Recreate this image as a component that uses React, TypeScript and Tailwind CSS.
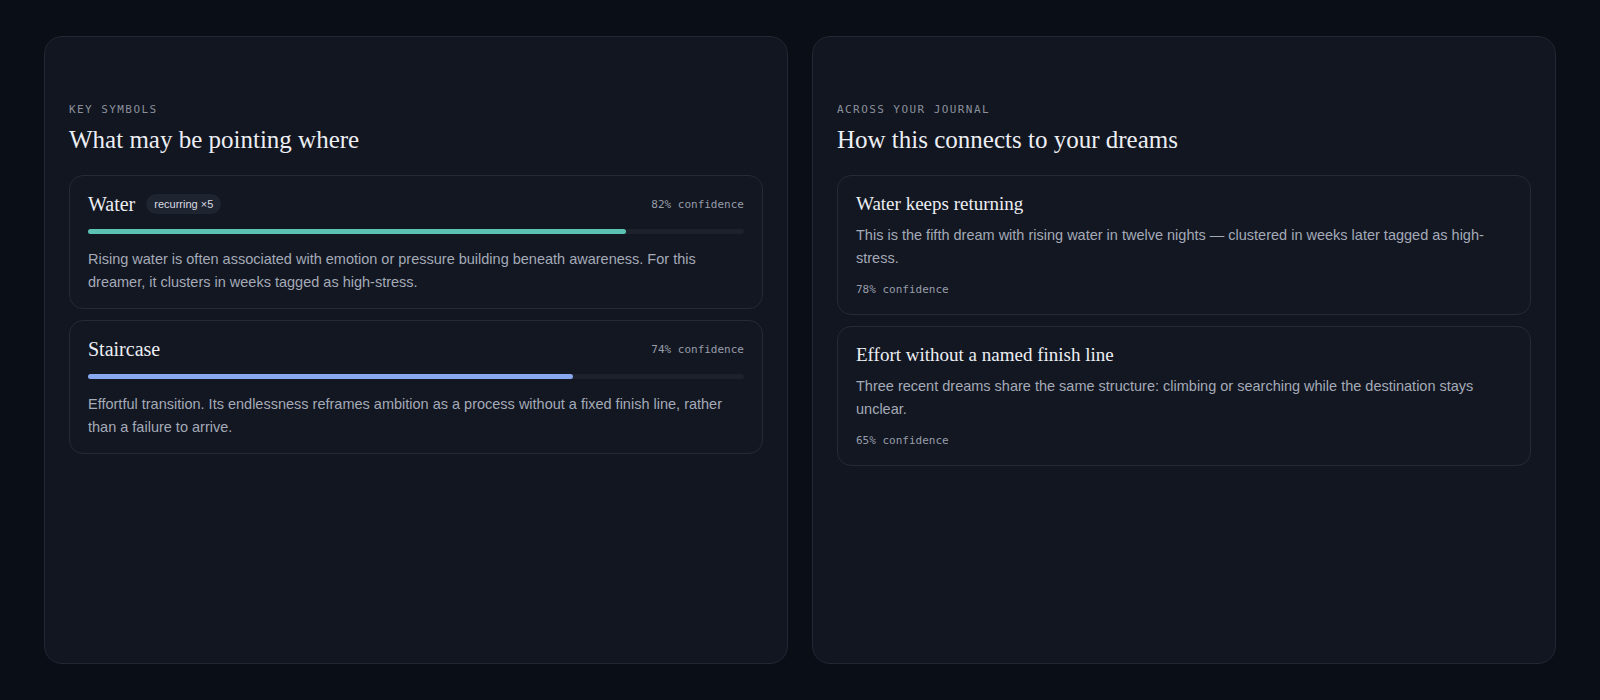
const serif = "font-['Liberation_Serif',_'DejaVu_Serif',_serif]";
const sans = "font-['Liberation_Sans',_Arial,_sans-serif]";
const mono = "font-['DejaVu_Sans_Mono',_'Liberation_Mono',_monospace]";

type Symbol = {
  name: string;
  badge?: string;
  confidence: number;
  bar: string;
  text: string;
};

const symbols: Symbol[] = [
  {
    name: "Water",
    badge: "recurring ×5",
    confidence: 82,
    bar: "bg-[#5cc2b3]",
    text: "Rising water is often associated with emotion or pressure building beneath awareness. For this dreamer, it clusters in weeks tagged as high-stress.",
  },
  {
    name: "Staircase",
    confidence: 74,
    bar: "bg-[#88a7ee]",
    text: "Effortful transition. Its endlessness reframes ambition as a process without a fixed finish line, rather than a failure to arrive.",
  },
];

const connections = [
  {
    title: "Water keeps returning",
    text: "This is the fifth dream with rising water in twelve nights — clustered in weeks later tagged as high-stress.",
    confidence: 78,
  },
  {
    title: "Effort without a named finish line",
    text: "Three recent dreams share the same structure: climbing or searching while the destination stays unclear.",
    confidence: 65,
  },
];

const PanelHeader = ({ label, title }: { label: string; title: string }) => (
  <div className="flex flex-col">
    <span className={`${mono} text-[11px] leading-4 tracking-[0.13em] text-[#8a909c] uppercase`}>
      {label}
    </span>
    <h2 className={`${serif} mt-[6px] text-[25px] leading-8 text-[#eceef3]`}>{title}</h2>
  </div>
);

const SymbolCard = ({ s }: { s: Symbol }) => (
  <div className="rounded-[14px] border border-[#252a37] bg-[#131722] px-[18px] pt-4 pb-[14px]">
    <div className="flex h-6 items-center">
      <span className={`${serif} text-[20px] leading-6 text-[#eceef3]`}>{s.name}</span>
      {s.badge && (
        <span
          className={`${sans} ml-[11px] flex h-5 items-center rounded-full bg-[#1f2431] px-2 text-[11px] font-medium text-[#d8dbe2]`}
        >
          {s.badge}
        </span>
      )}
      <span className={`${mono} ml-auto mt-[3px] text-[11px] text-[#979da9]`}>{s.confidence}% confidence</span>
    </div>
    <div className="mt-[13px] h-[5px] w-full rounded-full bg-[#1c212c]">
      <div className={`h-full rounded-full ${s.bar}`} style={{ width: `${s.confidence}%` }} />
    </div>
    <p className={`${sans} mt-[14px] text-[14.5px] leading-[23px] text-[#a4aab7]`}>{s.text}</p>
  </div>
);

const ConnectionCard = ({ c }: { c: (typeof connections)[number] }) => (
  <div className="rounded-[14px] border border-[#252a37] bg-[#131722] px-[18px] pt-4 pb-4">
    <h3 className={`${serif} text-[19px] leading-6 text-[#eceef3]`}>{c.title}</h3>
    <p className={`${sans} mt-2 text-[14.5px] leading-[23px] text-[#a4aab7]`}>{c.text}</p>
    <div className={`${mono} mt-3 text-[11px] leading-4 text-[#979da9]`}>{c.confidence}% confidence</div>
  </div>
);

export default function App() {
  return (
    <div className="flex h-[700px] w-full gap-6 bg-[#0a0e16] px-11 py-9">
      {/* Key symbols */}
      <section className="flex flex-1 flex-col rounded-[18px] border border-[#222734] bg-[#121620] px-6 pt-[65px]">
        <PanelHeader label="Key symbols" title="What may be pointing where" />
        <div className="mt-[19px] flex flex-col gap-[11px]">
          {symbols.map((s) => (
            <SymbolCard key={s.name} s={s} />
          ))}
        </div>
      </section>

      {/* Connections */}
      <section className="flex flex-1 flex-col rounded-[18px] border border-[#222734] bg-[#121620] px-6 pt-[65px]">
        <PanelHeader label="Across your journal" title="How this connects to your dreams" />
        <div className="mt-[19px] flex flex-col gap-[11px]">
          {connections.map((c) => (
            <ConnectionCard key={c.title} c={c} />
          ))}
        </div>
      </section>
    </div>
  );
}
